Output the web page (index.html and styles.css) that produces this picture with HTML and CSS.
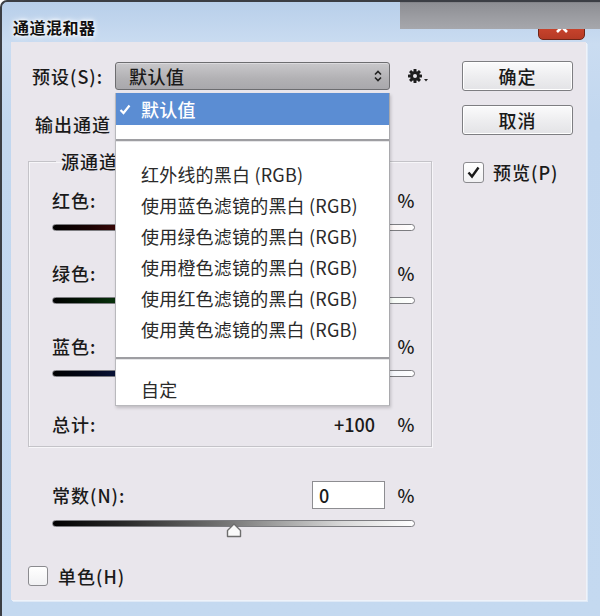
FILE: index.html
```html
<!DOCTYPE html>
<html lang="zh-CN">
<head>
<meta charset="utf-8">
<title>通道混和器</title>
<link rel="stylesheet" href="styles.css">
</head>
<body>
<div class="window">
  <div class="titlebar">
    <span class="title">通道混和器</span>
    <div class="close-btn"><svg width="16" height="12" viewBox="0 0 16 12"><path d="M3 1 L13 11 M13 1 L3 11" stroke="#fff" stroke-width="2.6" fill="none"/></svg></div>
    <div class="occluder"></div>
  </div>
  <div class="content">
    <div class="main">
      <div class="preset-row">
        <span class="lbl preset-lbl">预设(S):</span>
        <div class="select">
          <span class="select-val">默认值</span>
          <svg class="select-arrows" width="8" height="12" viewBox="0 0 8 12"><path d="M1 4.5 L4 1.5 L7 4.5 M1 7.5 L4 10.5 L7 7.5" stroke="#222" stroke-width="1.6" fill="none"/></svg>
        </div>
        <svg class="gear" width="22" height="16" viewBox="0 0 22 16">
          <g transform="translate(7 8)">
            <g fill="#1e1e1e">
              <rect x="-1.5" y="-7" width="3" height="14" rx="0.5"/>
              <rect x="-1.5" y="-7" width="3" height="14" rx="0.5" transform="rotate(45)"/>
              <rect x="-1.5" y="-7" width="3" height="14" rx="0.5" transform="rotate(90)"/>
              <rect x="-1.5" y="-7" width="3" height="14" rx="0.5" transform="rotate(135)"/>
            </g>
            <circle r="4.8" fill="#1e1e1e"/>
            <circle r="2" fill="#e8e6eb"/>
          </g>
          <path d="M16 11 L20 11 L18 13.5 Z" fill="#222"/>
        </svg>
      </div>
      <div class="output-row"><span class="lbl">输出通道</span></div>
      <fieldset class="source">
        <legend>源通道</legend>
        <div class="chan">
          <div class="chan-row"><span class="lbl grow">红色:</span><span class="num-box"></span><span class="pct">%</span></div>
          <div class="track track-red"></div>
        </div>
        <div class="chan">
          <div class="chan-row"><span class="lbl grow">绿色:</span><span class="num-box"></span><span class="pct">%</span></div>
          <div class="track track-green"></div>
        </div>
        <div class="chan">
          <div class="chan-row"><span class="lbl grow">蓝色:</span><span class="num-box"></span><span class="pct">%</span></div>
          <div class="track track-blue"></div>
        </div>
        <div class="chan-row total-row"><span class="lbl grow">总计:</span><span class="total-val">+100</span><span class="pct">%</span></div>
      </fieldset>
      <div class="constant">
        <div class="chan-row const-row"><span class="lbl grow">常数(N):</span><span class="num-box input">0</span><span class="pct">%</span></div>
        <div class="track track-gray">
          <svg class="thumb" width="16" height="15" viewBox="0 0 16 15"><path d="M8 1 L14.5 7.5 L14.5 13.5 L1.5 13.5 L1.5 7.5 Z" fill="#fafafa" stroke="#6e6e6e" stroke-width="1.4" stroke-linejoin="round"/></svg>
        </div>
      </div>
      <div class="mono-row">
        <span class="checkbox"></span>
        <span class="lbl">单色(H)</span>
      </div>
    </div>
    <div class="side">
      <div class="btn">确定</div>
      <div class="btn">取消</div>
      <div class="preview-row">
        <span class="checkbox checked"><svg width="17" height="17" viewBox="0 0 17 17"><path d="M3.5 8.5 L7 12.5 L13.5 3.5" stroke="#1a1a1a" stroke-width="2.4" fill="none"/></svg></span>
        <span class="lbl">预览(P)</span>
      </div>
    </div>
    <div class="menu">
      <div class="mi mi-sel"><svg class="check" width="12" height="11" viewBox="0 0 12 11"><path d="M1.5 6 L4.5 9 L10.5 1.5" stroke="#fff" stroke-width="2.2" fill="none"/></svg>默认值</div>
      <div class="mi-blank"></div>
      <div class="sep"></div>
      <div class="mi-group">
        <div class="mi">红外线的黑白 (RGB)</div>
        <div class="mi">使用蓝色滤镜的黑白 (RGB)</div>
        <div class="mi">使用绿色滤镜的黑白 (RGB)</div>
        <div class="mi">使用橙色滤镜的黑白 (RGB)</div>
        <div class="mi">使用红色滤镜的黑白 (RGB)</div>
        <div class="mi">使用黄色滤镜的黑白 (RGB)</div>
      </div>
      <div class="sep sep2"></div>
      <div class="mi mi-last">自定</div>
    </div>
  </div>
</div>
</body>
</html>
```
FILE: styles.css
```css
* { box-sizing: border-box; }
html, body { margin: 0; padding: 0; }
body {
  width: 600px;
  height: 616px;
  overflow: hidden;
  background: #ffffff;
  font-family: "Noto Sans CJK SC", "Noto Sans", sans-serif;
  color: #1a1a1a;
}

.window {
  position: relative;
  width: 600px;
  height: 616px;
  display: flex;
  flex-direction: column;
  background: linear-gradient(180deg, #b8cfea 0px, #cadcf1 42px, #c2d7ef 120px, #c4d9f0 100%);
  border-top: 2px solid #3b3e44;
  border-left: 2px solid #3b3e44;
  border-radius: 7px 0 0 0;
  overflow: hidden;
}

.titlebar {
  position: relative;
  height: 40px;
  flex: none;
  padding: 14px 0 0 11px;
}
.title {
  display: block;
  font-size: 16px;
  line-height: 22px;
  font-weight: 700;
  letter-spacing: 0.5px;
  color: #111;
  text-shadow: 0 0 3px #fff, 0 0 5px #fff, 0 0 7px #eef4fb;
}
.close-btn {
  position: absolute;
  left: 536px;
  top: 12px;
  width: 47px;
  height: 26px;
  background: linear-gradient(180deg, #e27a62, #c8432c 55%, #b53a25);
  border: 1px solid #6e2618;
  border-radius: 0 0 5px 5px;
  display: flex;
  align-items: center;
  justify-content: center;
}
.occluder {
  position: absolute;
  left: 398px;
  top: -2px;
  width: 200px;
  height: 29px;
  background: linear-gradient(180deg, #55565a 0px, #8d8e93 3px, #9c9da2 60%, #a6a7ac 100%);
}

.content {
  position: relative;
  flex: 1;
  margin: 0 14px 16px 9px;
  background: #e9e6ec;
  display: flex;
  align-items: flex-start;
  padding: 20px 0 0 17px;
  box-shadow: 1px 1px 0 #eef3fa, 2px 2px 0 #dfe9f6;
}

.lbl {
  font-size: 18px;
  line-height: 26px;
  font-weight: 500;
  letter-spacing: 1px;
  white-space: nowrap;
}
.grow { flex: 1; }

.main {
  width: 404px;
  display: flex;
  flex-direction: column;
}

.preset-row {
  display: flex;
  align-items: center;
  height: 28px;
}
.preset-lbl {
  margin-left: 4px;
  width: 83px;
}
.select {
  width: 275px;
  height: 28px;
  border: 1px solid #6d6d70;
  border-radius: 3px;
  background: linear-gradient(180deg, #c9c8cb, #b2b1b4 60%, #a9a8ac);
  display: flex;
  align-items: center;
  padding: 0 7px 0 13px;
  box-shadow: inset 0 1px 0 #dcdbde;
}
.select-val {
  flex: 1;
  font-size: 18px;
  line-height: 26px;
  font-weight: 500;
  letter-spacing: 0.5px;
}
.gear {
  margin-left: 18px;
}

.output-row {
  margin-top: 21px;
  margin-left: 7px;
  height: 26px;
  display: flex;
}

.source {
  margin: 13px 0 0 0;
  padding: 15px 16px 9px 23px;
  border: 1px solid #c4c3c8;
  box-shadow: 1px 1px 0 #f7f6f9, inset 1px 1px 0 #f7f6f9;
  min-width: 0;
}
.source legend {
  margin-left: 4px;
  padding: 0 5px;
  font-size: 18px;
  line-height: 22px;
  font-weight: 500;
  letter-spacing: 1px;
}

.chan { margin-bottom: 29px; }
.chan-row {
  display: flex;
  align-items: center;
  height: 26px;
}
.num-box {
  width: 73px;
  height: 26px;
}
.pct {
  margin-left: 12px;
  width: 18px;
  font-size: 18px;
  line-height: 26px;
  font-weight: 500;
  text-align: center;
}
.track {
  position: relative;
  margin-top: 11px;
  height: 7px;
  border: 1px solid #7c7c80;
  border-radius: 4px;
}
.track-red { background: linear-gradient(90deg, #000 0%, #1a0303 10%, #b21c1c 45%, #f2dede 80%, #ffffff 100%); }
.track-green { background: linear-gradient(90deg, #000 0%, #031a05 10%, #1f8f2a 45%, #e2f2e2 80%, #ffffff 100%); }
.track-blue { background: linear-gradient(90deg, #000 0%, #03071a 10%, #1f3fa8 45%, #dfe4f3 80%, #ffffff 100%); }
.track-gray { background: linear-gradient(90deg, #000 0%, #2a2a2a 20%, #7b7b7b 50%, #d8d8d8 80%, #ffffff 100%); }

.total-row { margin-top: 34px; }
.total-val {
  width: 73px;
  padding-right: 10px;
  text-align: right;
  font-size: 18px;
  line-height: 26px;
  font-weight: 500;
}

.constant {
  margin-top: 34px;
  padding: 0 17px 0 24px;
}
.const-row { height: 28px; }
.input {
  height: 28px;
  border: 1px solid #8d8d91;
  background: #fff;
  font-size: 18px;
  line-height: 26px;
  font-weight: 500;
  padding-left: 6px;
}
.thumb {
  position: absolute;
  left: 50%;
  top: 2px;
  transform: translateX(-50%);
}

.mono-row {
  margin-top: 36px;
  height: 26px;
  display: flex;
  align-items: center;
  gap: 10px;
}

.checkbox {
  width: 20px;
  height: 20px;
  border: 1px solid #8b8b8f;
  border-radius: 3px;
  background: linear-gradient(180deg, #ffffff, #f1f1f3);
  display: flex;
  align-items: center;
  justify-content: center;
}

.side {
  margin-left: 30px;
  margin-top: -1px;
  width: 111px;
  display: flex;
  flex-direction: column;
}
.btn {
  height: 30px;
  border: 1px solid #7e7e82;
  border-radius: 3px;
  background: linear-gradient(180deg, #fbfbfc, #eeeef0 50%, #e3e3e6);
  box-shadow: inset 0 0 0 1px #fff;
  font-size: 18px;
  line-height: 28px;
  font-weight: 500;
  text-align: center;
  letter-spacing: 1px;
}
.btn + .btn { margin-top: 14px; }
.preview-row {
  margin-top: 24px;
  margin-left: 1px;
  display: flex;
  align-items: center;
  gap: 9px;
}
.checked { width: 21px; height: 21px; }

.menu {
  position: absolute;
  left: 104px;
  top: 51px;
  width: 275px;
  background: #fff;
  border-left: 1px solid #b9b9bd;
  border-right: 1px solid #a9a9ad;
  border-bottom: 1px solid #b9b9bd;
  box-shadow: 1px 2px 3px rgba(0,0,0,0.18);
  padding-bottom: 1px;
}
.mi {
  height: 31px;
  display: flex;
  align-items: center;
  padding-left: 25px;
  font-size: 18px;
  letter-spacing: 0.2px;
  color: #2a2a2a;
  white-space: nowrap;
}
.mi-sel {
  height: 32px;
  background: #5b8dd3;
  color: #fff;
  padding-left: 2px;
  font-weight: 500;
}
.check { margin: 0 10px 0 1px; }
.mi-blank { height: 14px; }
.sep {
  height: 3px;
  border-top: 2px solid #9e9ea2;
  border-bottom: 1px solid #e6e6e8;
}
.mi-group { padding-top: 16px; }
.sep2 { margin-top: 13px; }
.mi-last { margin-top: 13px; }
```
